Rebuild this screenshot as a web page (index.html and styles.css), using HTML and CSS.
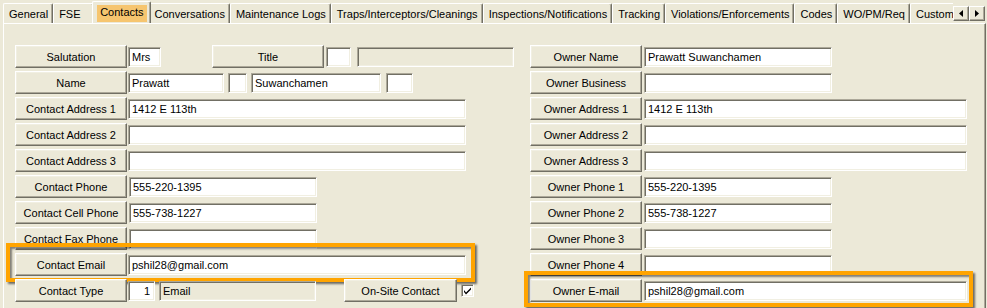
FILE: index.html
```html
<!DOCTYPE html>
<html lang="en">
<head>
  <meta charset="UTF-8">
  <title>Contacts</title>
  <link rel="stylesheet" href="styles.css">
</head>
<body>
  <div class="strip">
    <div class="tabs">
      <div class="tab">General</div>
      <div class="tab tab-fse">FSE</div>
      <div class="tab active"><span>Contacts</span></div>
      <div class="tab">Conversations</div>
      <div class="tab">Maintenance Logs</div>
      <div class="tab">Traps/Interceptors/Cleanings</div>
      <div class="tab">Inspections/Notifications</div>
      <div class="tab">Tracking</div>
      <div class="tab">Violations/Enforcements</div>
      <div class="tab">Codes</div>
      <div class="tab">WO/PM/Req</div>
      <div class="tab">Custom</div>
    </div>
    <div class="scroll">
      <button class="arrow"><svg width="4" height="7" viewBox="0 0 4 7"><path d="M4 0V7L0 3.5Z" fill="#000"/></svg></button>
      <button class="arrow"><svg width="4" height="7" viewBox="0 0 4 7"><path d="M0 0V7L4 3.5Z" fill="#000"/></svg></button>
    </div>
  </div>

  <div class="panel">
    <div class="col col-left">
      <div class="row">
        <button class="lbl">Salutation</button>
        <input class="fld w-sal" type="text" value="Mrs">
        <button class="lbl lbl-title">Title</button>
        <input class="fld w-tit" type="text" value="">
        <div class="fld off w-titdesc"></div>
      </div>
      <div class="row">
        <button class="lbl">Name</button>
        <input class="fld w-first" type="text" value="Prawatt">
        <input class="fld w-mi" type="text" value="">
        <input class="fld w-last" type="text" value="Suwanchamen">
        <input class="fld w-suf" type="text" value="">
      </div>
      <div class="row">
        <button class="lbl">Contact Address 1</button>
        <input class="fld w-long" type="text" value="1412 E 113th">
      </div>
      <div class="row">
        <button class="lbl">Contact Address 2</button>
        <input class="fld w-long" type="text" value="">
      </div>
      <div class="row">
        <button class="lbl">Contact Address 3</button>
        <input class="fld w-long" type="text" value="">
      </div>
      <div class="row">
        <button class="lbl">Contact Phone</button>
        <input class="fld w-mid" type="text" value="555-220-1395">
      </div>
      <div class="row">
        <button class="lbl">Contact Cell Phone</button>
        <input class="fld w-mid" type="text" value="555-738-1227">
      </div>
      <div class="row">
        <button class="lbl">Contact Fax Phone</button>
        <input class="fld w-mid" type="text" value="">
      </div>
      <div class="row">
        <button class="lbl">Contact Email</button>
        <input class="fld w-long" type="text" value="pshil28@gmail.com">
        <span class="mark mark-left"></span>
      </div>
      <div class="row">
        <button class="lbl">Contact Type</button>
        <input class="fld w-code" type="text" value="1">
        <div class="fld off w-type">Email</div>
        <button class="lbl lbl-onsite">On-Site Contact</button>
        <span class="check"><svg width="9" height="9" viewBox="0 0 9 9"><path d="M1 4L3 6.5L8 1.5V3.5L3 8.5L1 6Z" fill="#000"/></svg></span>
      </div>
    </div>

    <div class="col col-right">
      <div class="row">
        <button class="lbl">Owner Name</button>
        <input class="fld w-mid" type="text" value="Prawatt Suwanchamen">
      </div>
      <div class="row">
        <button class="lbl">Owner Business</button>
        <input class="fld w-mid" type="text" value="">
      </div>
      <div class="row">
        <button class="lbl">Owner Address 1</button>
        <input class="fld w-wide" type="text" value="1412 E 113th">
      </div>
      <div class="row">
        <button class="lbl">Owner Address 2</button>
        <input class="fld w-wide" type="text" value="">
      </div>
      <div class="row">
        <button class="lbl">Owner Address 3</button>
        <input class="fld w-wide" type="text" value="">
      </div>
      <div class="row">
        <button class="lbl">Owner Phone 1</button>
        <input class="fld w-mid" type="text" value="555-220-1395">
      </div>
      <div class="row">
        <button class="lbl">Owner Phone 2</button>
        <input class="fld w-mid" type="text" value="555-738-1227">
      </div>
      <div class="row">
        <button class="lbl">Owner Phone 3</button>
        <input class="fld w-mid" type="text" value="">
      </div>
      <div class="row">
        <button class="lbl">Owner Phone 4</button>
        <input class="fld w-mid" type="text" value="">
      </div>
      <div class="row">
        <button class="lbl">Owner E-mail</button>
        <input class="fld w-wide" type="text" value="pshil28@gmail.com">
        <span class="mark mark-right"></span>
      </div>
    </div>
  </div>
</body>
</html>
```

FILE: styles.css
```css
body {
  margin: 0;
  background: #ece9d8;
  font-family: "Liberation Sans", Arial, sans-serif;
  font-size: 11px;
  color: #000;
  overflow: hidden;
  height: 308px;
}

/* tab strip */
.strip {
  display: flex;
  height: 23px;
  padding-left: 3px;
}

.tabs {
  display: flex;
  align-items: flex-end;
  width: 950px;
  overflow: hidden;
  padding-top: 1px;
}

.tab {
  flex: none;
  height: 20px;
  min-width: 41px;
  box-sizing: border-box;
  padding: 3px 4px 0 5px;
  line-height: 14px;
  white-space: nowrap;
  border-top: 1px solid #fff;
  border-left: 1px solid #fff;
  border-right: 1px solid #716f64;
  box-shadow: inset -1px 0 #aca899;
  border-radius: 2px 2px 0 0;
}

.tab.active {
  position: relative;
  z-index: 1;
  height: 23px;
  margin: 0 -2px -1px -2px;
  padding: 3px 3px 0 4px;
  background: #ece9d8;
}

.tab.active span {
  display: inline-block;
  height: 17px;
  line-height: 15px;
  padding: 0 3px;
  background: #f6c56f;
}

.scroll {
  display: flex;
  padding-top: 6px;
}

.arrow {
  width: 16px;
  height: 15px;
  padding: 0;
  display: flex;
  align-items: center;
  justify-content: center;
  background: #ece9d8;
  border: 1px solid;
  border-color: #fff #716f64 #716f64 #fff;
  box-shadow: inset -1px -1px #aca899;
}

/* page */
.panel {
  display: flex;
  margin-left: 3px;
  width: 983px;
  height: 285px;
  box-sizing: border-box;
  padding: 21px 0 0 11px;
  border-top: 1px solid #fff;
  border-left: 1px solid #fff;
  border-right: 1px solid #716f64;
  box-shadow: inset -1px 0 #aca899;
}

.col {
  display: flex;
  flex-direction: column;
  gap: 3px;
}

.col-left {
  width: 515px;
}

.row {
  position: relative;
  display: flex;
  align-items: center;
  height: 23px;
}

.lbl {
  flex: none;
  width: 112px;
  height: 23px;
  padding: 0;
  margin-right: 1px;
  font: inherit;
  color: #000;
  background: #ece9d8;
  border: 1px solid;
  border-color: #fff #716f64 #716f64 #fff;
  box-shadow: inset -1px -1px #aca899, inset 1px 1px #f1efe2;
}

.lbl-title {
  margin-left: 51px;
  margin-right: 2px;
}

.lbl-onsite {
  width: 113px;
  margin-left: 28px;
  margin-right: 4px;
}

.fld {
  flex: none;
  height: 20px;
  box-sizing: border-box;
  padding: 0 0 0 3px;
  font: inherit;
  line-height: 18px;
  color: #000;
  background: #fff;
  border: 1px solid;
  border-color: #aca899 #fff #fff #aca899;
  box-shadow: inset 1px 1px #716f64, inset -1px -1px #f1efe2;
  outline: none;
}

.off {
  background: #ece9d8;
}

.w-sal { width: 33px; }
.w-tit { width: 25px; }
.w-titdesc { width: 157px; margin-left: 6px; }
.w-first { width: 96px; }
.w-mi { width: 19px; margin-left: 4px; }
.w-last { width: 130px; margin-left: 4px; }
.w-suf { width: 27px; margin-left: 5px; }
.w-long { width: 338px; }
.w-mid { width: 188px; margin-left: 1px; }
.w-wide { width: 323px; margin-left: 1px; }
.w-code { width: 27px; text-align: right; padding-right: 4px; }
.w-type { width: 157px; margin-left: 4px; }

.check {
  flex: none;
  width: 13px;
  height: 13px;
  box-sizing: border-box;
  display: flex;
  align-items: center;
  justify-content: center;
  background: #fff;
  border: 1px solid;
  border-color: #aca899 #fff #fff #aca899;
  box-shadow: inset 1px 1px #716f64, inset -1px -1px #f1efe2;
}

/* orange call-out frames */
.mark {
  position: absolute;
  box-sizing: border-box;
  border: 4px solid #ffa400;
  box-shadow: 2px 2px 2px rgba(0, 0, 0, 0.55), inset 2px 2px 2px rgba(0, 0, 0, 0.45);
  pointer-events: none;
}

.mark-left {
  left: -9px;
  top: -10px;
  width: 469px;
  height: 39px;
}

.mark-right {
  left: -6px;
  top: -8px;
  width: 449px;
  height: 36px;
}
```
